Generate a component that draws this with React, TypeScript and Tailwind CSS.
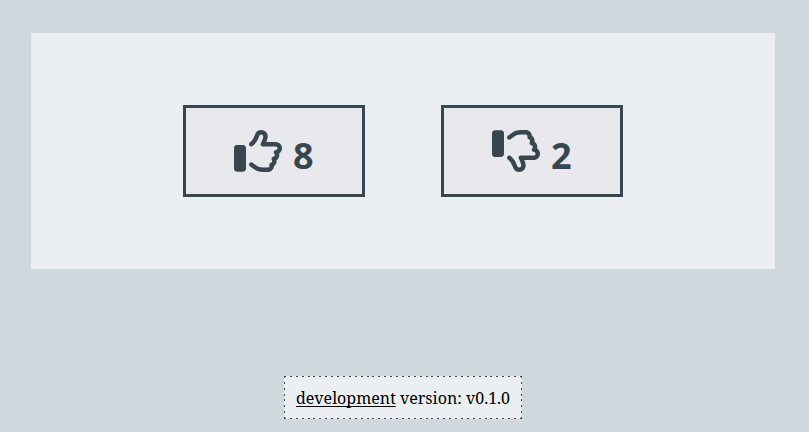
function Thumb({ down = false }: { down?: boolean }) {
  return (
    <svg viewBox="0 0 512 512" className={down ? "size-12 -scale-y-100" : "size-12"} fill="currentColor" aria-hidden="true">
      <path d="M96 191.1H32c-17.67 0-32 14.33-32 31.1v223.1c0 17.67 14.33 31.1 32 31.1h64c17.67 0 32-14.33 32-31.1V223.1C128 206.3 113.7 191.1 96 191.1zM512 227c0-36.89-30.05-66.92-66.97-66.92h-99.86C354.7 135.1 360 113.5 360 100.8c0-33.8-26.2-68.78-70.06-68.78c-46.61 0-59.36 32.44-69.61 58.5c-31.66 80.5-60.33 66.39-60.33 93.47c0 12.84 10.36 23.99 24.02 23.99c5.256 0 10.55-1.721 14.97-5.26c76.76-61.37 57.97-122.7 90.95-122.7c16.08 0 22.06 12.75 22.06 20.79c0 7.404-7.594 39.55-25.55 71.59c-2.046 3.646-3.066 7.686-3.066 11.72c0 13.92 11.43 23.1 24 23.1h137.6C455.5 208.1 464 216.6 464 227c0 9.809-7.766 18.03-17.67 18.71c-12.66 .8593-22.36 11.4-22.36 23.94c0 15.47 11.39 15.95 11.39 28.91c0 25.37-35.03 12.34-35.03 42.15c0 11.22 6.392 13.03 6.392 22.25c0 22.66-29.77 13.76-29.77 40.64c0 4.515 1.11 5.961 1.11 9.456c0 10.45-8.516 18.95-18.97 18.95h-52.62c-25.62 0-51.02-8.466-71.5-23.81l-36.66-27.51c-4.315-3.245-9.37-4.811-14.38-4.811c-13.85 0-24.03 11.38-24.03 24.04c0 7.287 3.312 14.42 9.596 19.13l36.67 27.52C235 468.1 270.6 480 306.6 480h52.62c35.33 0 64.36-27.49 66.8-62.2c17.77-12.23 28.83-32.51 28.83-54.83c0-3.046-.2187-6.107-.6406-9.122c17.84-12.15 29.28-32.58 29.28-55.28c0-5.311-.6406-10.54-1.875-15.64C499.9 270.1 512 250.2 512 227z" />
    </svg>
  );
}

function VoteButton({ count, down = false }: { count: number; down?: boolean }) {
  return (
    <button className="flex h-[92px] w-[182px] items-center justify-center gap-[10.5px] border-3 border-[#37474f] bg-[#e9e8ec] text-[#37474f]">
      <Thumb down={down} />
      <span className="pt-2.5 font-['Noto_Sans',sans-serif] text-[36px] leading-none font-bold">{count}</span>
    </button>
  );
}

export default function App() {
  return (
    <div className="h-[432px] w-[809px] overflow-hidden bg-[#cfd8dc] pt-[33px] pl-[31px]">
      <main className="flex h-[236px] w-[744px] justify-center gap-[76px] bg-[#eceff1] pt-[72px]">
        <VoteButton count={8} />
        <VoteButton count={2} down />
      </main>
      <footer className="mt-[107px] flex w-[744px] justify-center">
        <p className="flex h-[43px] w-[238px] items-center justify-center bg-[#eceff1] bg-[repeating-linear-gradient(90deg,#37474f_0_2px,#eceff1_2px_5.9px),repeating-linear-gradient(90deg,#37474f_0_2px,#eceff1_2px_5.9px),repeating-linear-gradient(180deg,#37474f_0_2px,#eceff1_2px_5.86px),repeating-linear-gradient(180deg,#37474f_0_2px,#eceff1_2px_5.86px)] bg-[size:100%_1px,100%_1px,1px_100%,1px_100%] [background-position:0_0,0_100%,0_0,100%_0] bg-no-repeat font-['Noto_Serif','DejaVu_Serif',serif] text-[16px] text-black">
          <span><a className="underline decoration-1 underline-offset-2 [text-decoration-skip-ink:none]">development</a> version: v0.1.0</span>
        </p>
      </footer>
    </div>
  );
}
